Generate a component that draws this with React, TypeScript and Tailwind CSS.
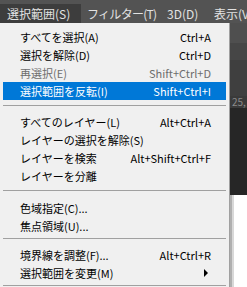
type Item = { label: string; shortcut?: string; disabled?: boolean; active?: boolean; sub?: boolean }

const groups: Item[][] = [
  [
    { label: 'すべてを選択(A)', shortcut: 'Ctrl+A' },
    { label: '選択を解除(D)', shortcut: 'Ctrl+D' },
    { label: '再選択(E)', shortcut: 'Shift+Ctrl+D', disabled: true },
    { label: '選択範囲を反転(I)', shortcut: 'Shift+Ctrl+I', active: true },
  ],
  [
    { label: 'すべてのレイヤー(L)', shortcut: 'Alt+Ctrl+A' },
    { label: 'レイヤーの選択を解除(S)' },
    { label: 'レイヤーを検索', shortcut: 'Alt+Shift+Ctrl+F' },
    { label: 'レイヤーを分離' },
  ],
  [{ label: '色域指定(C)...' }, { label: '焦点領域(U)...' }],
  [
    { label: '境界線を調整(F)...', shortcut: 'Alt+Ctrl+R' },
    { label: '選択範囲を変更(M)', sub: true },
  ],
]

// separator block height / line offset before each group, last one closes the menu
const seps = ['', 'h-[13px] pt-[5px]', 'h-[14px] pt-[5px]', 'h-[11px] pt-[3px]', 'h-[11px] pt-[3px]']

const font = { fontFamily: '"Noto Sans CJK JP", "Liberation Sans", sans-serif' }

function Separator({ cls }: { cls: string }) {
  return (
    <div className={`px-[3px] ${cls}`}>
      <div className="h-px w-full bg-[#a0a0a0]" />
    </div>
  )
}

function Row({ item }: { item: Item }) {
  const color = item.active ? 'bg-[#0078d7] text-white' : item.disabled ? 'text-[#6d6d6d]' : 'text-black'
  return (
    <div className={`mx-[3px] h-[18px] flex items-center pl-[17px] pr-[15px] text-[11px] leading-none whitespace-nowrap ${color}`}>
      <span className="flex-1">{item.label}</span>
      {item.shortcut && <span>{item.shortcut}</span>}
      {item.sub && (
        <svg width="5" height="8" viewBox="0 0 5 8" className="mr-[2px]">
          <path d="M0 0 L4 4 L0 8 Z" fill="#000" />
        </svg>
      )}
    </div>
  )
}

export default function App() {
  return (
    <div className="w-[247px] h-[287px] overflow-hidden bg-[#535353] flex flex-col" style={font}>
      <div className="h-[23px] shrink-0 flex items-end text-[12px] leading-none text-[#e2e2e2] whitespace-nowrap">
        <div className="h-[19px] w-[81px] shrink-0 bg-[#3d3d3d] flex items-center pl-[7px]">選択範囲(S)</div>
        <div className="h-[19px] w-[86px] shrink-0 flex items-center pl-[6px] tracking-[-0.7px]">フィルター(T)</div>
        <div className="h-[19px] w-[47px] shrink-0 flex items-center">3D(D)</div>
        <div className="h-[19px] shrink-0 flex items-center">表示(V)</div>
      </div>
      <div className="flex flex-1">
        <div className="w-[230px] shrink-0 bg-[#f0f0f0] border-r border-[#a0a0a0] pt-[5px]">
          {groups.map((g, i) => (
            <div key={i}>
              {i > 0 && <Separator cls={seps[i]} />}
              {g.map((it) => (
                <Row key={it.label} item={it} />
              ))}
            </div>
          ))}
          <Separator cls={seps[4]} />
        </div>
        <div className="flex-1 flex flex-col">
          <div className="h-[20px] bg-[#4f4f4f]" />
          <div className="h-[17px] bg-[#464646]" />
          <div className="h-[36px] bg-[#3f3f3f]" />
          <div className="h-[12px] bg-[#3a3a3a] text-[10px] text-[#8a8a8a] pl-[2px] leading-[12px]">25,</div>
          <div className="h-[87px] bg-[#262626]" />
          <div className="flex-1 flex bg-white">
            <div className="w-[2px] bg-[#b0b0b0]" />
            <div className="w-[2px] bg-[#d8d8d8]" />
          </div>
        </div>
      </div>
    </div>
  )
}
